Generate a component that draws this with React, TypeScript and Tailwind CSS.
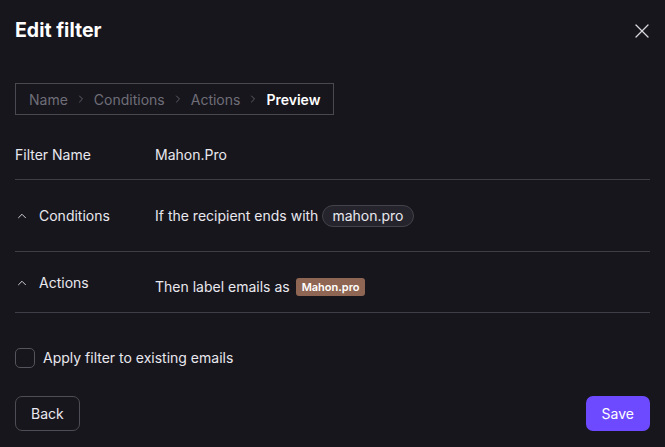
import { ChevronRight, ChevronUp, X } from 'lucide-react'

export default function App() {
  return (
    <div
      className="w-[665px] h-[447px] bg-[#17161d] text-[#e9e8ee] px-[15px] overflow-hidden"
      style={{ fontFamily: 'Inter, "Noto Sans", sans-serif' }}
    >
      <div className="flex items-center justify-between h-[62px]">
        <h1 className="text-[19.5px] font-bold text-white">Edit filter</h1>
        <X className="w-6 h-6 text-[#d8d7de] -mr-[4px]" strokeWidth={1.3} />
      </div>

      <div className="mt-[21px] inline-flex items-center gap-[7px] border border-[#4a4952] h-[32px] px-[13px] text-[14px]">
        <span className="text-[#6f6e78]">Name</span>
        <ChevronRight className="w-3 h-3 text-[#5f5e68]" />
        <span className="text-[#6f6e78]">Conditions</span>
        <ChevronRight className="w-3 h-3 text-[#5f5e68]" />
        <span className="text-[#6f6e78]">Actions</span>
        <ChevronRight className="w-3 h-3 text-[#5f5e68]" />
        <span className="font-semibold text-white">Preview</span>
      </div>

      <div className="mt-[15px] text-[14px]">
        <div className="flex items-center h-[50px] border-b border-[#3f3e46]">
          <span className="w-[140px]">Filter Name</span>
          <span>Mahon.Pro</span>
        </div>
        <div className="flex items-center h-[72px] border-b border-[#3f3e46]">
          <span className="w-[140px] flex items-center gap-[10px]">
            <ChevronUp className="w-[14px] h-[14px]" strokeWidth={1.5} />
            Conditions
          </span>
          <span className="flex items-center gap-1">
            If the recipient ends with
            <span className="rounded-full border border-[#44434b] bg-[#25242c] px-[9px] h-[22px] flex items-center">
              mahon.pro
            </span>
          </span>
        </div>
        <div className="flex items-start h-[61px] border-b border-[#3f3e46] pt-[21px]">
          <span className="w-[140px] flex items-center gap-[10px] leading-[20px]">
            <ChevronUp className="w-[14px] h-[14px]" strokeWidth={1.5} />
            Actions
          </span>
          <span className="flex items-center gap-[6px] mt-[4px] leading-[20px]">
            Then label emails as
            <span className="rounded-[3px] bg-[#8f6653] text-white font-semibold text-[11px] px-[6px] h-[18px] flex items-center">
              Mahon.pro
            </span>
          </span>
        </div>
      </div>

      <label className="mt-[34px] flex items-center gap-[8px] text-[14px]">
        <span className="w-[20px] h-[20px] rounded-[5px] border border-[#55545c]" />
        Apply filter to existing emails
      </label>

      <div className="mt-[28px] flex justify-between">
        <button className="h-[35px] px-[15px] rounded-[7px] border border-[#4e4d55] text-[14px]">
          Back
        </button>
        <button className="h-[35px] px-[16px] rounded-[7px] bg-[#6d4aff] text-white text-[14px]">
          Save
        </button>
      </div>
    </div>
  )
}
